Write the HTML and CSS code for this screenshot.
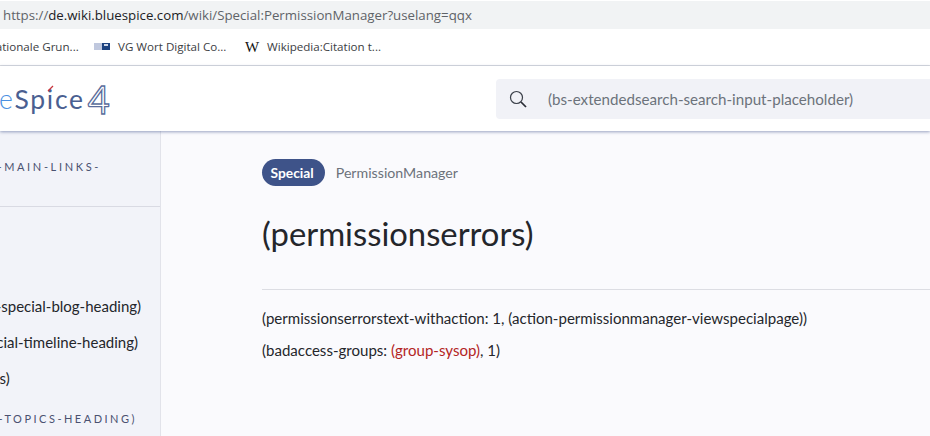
FILE: index.html
```html
<!DOCTYPE html>
<html lang="en">
<head>
<meta charset="utf-8">
<title>PermissionManager</title>
<link rel="stylesheet" href="styles.css">
</head>
<body>
<div class="browser">
  <div class="urlbar"><span class="dim">https://</span>de.wiki.bluespice.com<span class="dim">/wiki/Special:PermissionManager?uselang=qqx</span></div>
  <div class="bookmarks">
    <span class="bm bm-first">Nationale Grun...</span>
    <span class="bm bm-vg"><svg class="fav" width="16" height="16" viewBox="0 0 16 16"><rect x="0" y="4" width="8" height="7" fill="#c0c8de"/><rect x="8" y="4" width="8" height="7" fill="#1d4380"/><rect x="10" y="5" width="4" height="2" fill="#cfd8e8"/></svg>VG Wort Digital Co...</span>
    <span class="bm bm-wp"><span class="wiki-w">W</span>Wikipedia:Citation t...</span>
  </div>
</div>
<header class="header">
  <div class="logo"><span class="logo-blue">e</span><span class="logo-dark">Spice</span><span class="logo-four">4</span><svg class="logo-tick" width="7" height="7" viewBox="0 0 7 7"><path d="M1 6 L6 1" stroke="#c8343c" stroke-width="1.3"/></svg></div>
  <div class="search">
    <svg class="search-icon" width="18" height="18" viewBox="0 0 18 18" fill="none"><circle cx="7.5" cy="7.5" r="6" stroke="#3a3f48" stroke-width="1.2"/><path d="M12 12 L17 17" stroke="#2a2e36" stroke-width="1.7"/></svg>
    <span class="placeholder">(bs-extendedsearch-search-input-placeholder)</span>
  </div>
</header>
<div class="main">
  <aside class="sidebar">
    <div class="side-head head-main">(BS-NAVIGATION-MAIN-LINKS-</div>
    <hr class="side-rule">
    <div class="side-link link-blog">(bs-blog-special-blog-heading)</div>
    <div class="side-link link-time">(bs-special-timeline-heading)</div>
    <div class="side-link link-s">(bs-links)</div>
    <div class="side-head head-topics">(BS-TOPICS-HEADING)</div>
  </aside>
  <main class="content">
    <div class="crumbs"><span class="pill">Special</span><span class="crumb">PermissionManager</span></div>
    <h1 class="title">(permissionserrors)</h1>
    <hr class="rule">
    <p class="para">(permissionserrorstext-withaction: 1, (action-permissionmanager-viewspecialpage))</p>
    <p class="para">(badaccess-groups: <a class="redlink">(group-sysop)</a>, 1)</p>
  </main>
</div>
</body>
</html>
```
FILE: styles.css
```css
* { box-sizing: border-box; }
html, body { margin: 0; padding: 0; height: 100%; overflow: hidden; }
body { font-family: Lato, sans-serif; background: #fafafd; color: #24262b; width: 930px; height: 436px; display: flex; flex-direction: column; }

.browser { background: #fff; height: 66px; padding-top: 1px; border-bottom: 1px solid #dadce0; flex: none; }
.urlbar { height: 28px; background: #f1f3f4; padding-left: 3px; font: 13.28px/28px "Open Sans", sans-serif; color: #202124; white-space: nowrap; }
.dim { color: #5f6368; }
.bookmarks { height: 36px; display: flex; align-items: center; font: 11.6px/16px "Open Sans", sans-serif; color: #3c4043; white-space: nowrap; }
.bm { display: flex; align-items: center; }
.bm-first { margin-left: -13px; width: 107px; }
.bm-vg { width: 150px; }
.fav { margin-right: 8px; }
.wiki-w { font: 15px/16px "Liberation Serif", serif; color: #111; width: 16px; margin-right: 7px; text-align: center; }

.header { height: 65px; background: #fff; flex: none; display: flex; align-items: center; position: relative; z-index: 1; box-shadow: 0 1px 3px rgba(70,85,140,.55); }
.logo { position: relative; width: 496px; flex: none; font-size: 26.5px; font-weight: 300; letter-spacing: 1.7px; line-height: 40px; margin-left: -1px; white-space: nowrap; display: flex; align-items: center; }
.logo-blue { color: #4a90e2; }
.logo-dark { color: #4a5f91; font-weight: 400; }
.logo-four { color: #fff; -webkit-text-stroke: 1.3px #5a6d9c; font-size: 38px; font-weight: 400; letter-spacing: 0; margin-left: 3px; }
.logo-tick { position: absolute; left: 48px; top: 6px; }
.search { flex: 1; height: 40px; margin-left: 1px; background: #f1f2f7; border-radius: 4px 0 0 4px; display: flex; align-items: center; padding-left: 13px; }
.search-icon { flex: none; }
.placeholder { margin-left: 21px; font-size: 15.15px; color: #6c727b; white-space: nowrap; }

.main { flex: 1; display: flex; min-height: 0; }
.sidebar { width: 161px; flex: none; background: #f2f3f9; border-right: 1px solid #e2e3ea; overflow: hidden; white-space: nowrap; }
.side-head { font-size: 11px; letter-spacing: 2.65px; color: #4a5170; line-height: 14px; }
.head-main { margin: 29px 0 0 -127px; }
.side-rule { border: 0; border-top: 1px solid #d9dae3; margin: 32px 0 0; }
.side-link { font-size: 15px; line-height: 24px; color: #24262b; }
.link-blog { margin: 87px 0 0 -57px; }
.link-time { margin: 12px 0 0 -51px; }
.link-s { margin: 12px 0 0 -48px; }
.head-topics { margin: 22px 0 0 -25px; letter-spacing: 2.5px; }

.content { flex: 1; padding: 27px 0 0 101px; min-width: 0; }
.crumbs { display: flex; align-items: center; height: 28px; }
.pill { background: #3e5389; color: #fff; font-size: 13.8px; font-weight: 700; height: 27px; line-height: 27px; padding: 0 11px 0 8.5px; border-radius: 14px; }
.crumb { margin-left: 11px; font-size: 14.2px; color: #6c727b; }
.title { margin: 28px 0 0; font-size: 32.8px; font-weight: 400; line-height: 40px; color: #24262b; }
.rule { border: 0; border-top: 1px solid #dcdde3; margin: 35px 0 0; }
.para { margin: 0; font-size: 15.05px; line-height: 24px; color: #24262b; }
.rule + .para { margin-top: 16px; }
.para + .para { margin-top: 8px; }
.redlink { color: #b32424; }
```
